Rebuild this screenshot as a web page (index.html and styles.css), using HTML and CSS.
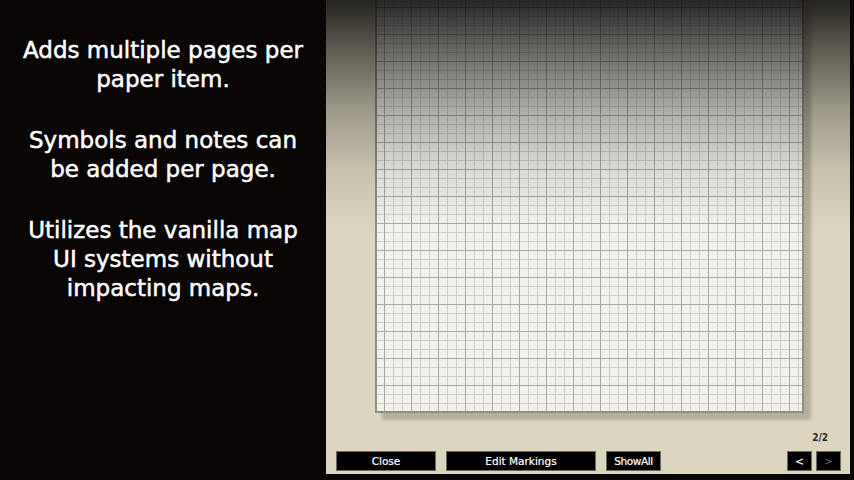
FILE: index.html
```html
<!DOCTYPE html>
<html lang="en">
<head>
    <meta charset="UTF-8">
    <meta name="viewport" content="width=device-width, initial-scale=1.0">
    <title>Paper Pages</title>
    <link rel="stylesheet" href="styles.css">
</head>
<body>
    <main class="stage">
        <section class="info">
            <p>Adds multiple pages per paper item.</p>
            <p>Symbols and notes can be added per page.</p>
            <p>Utilizes the vanilla map UI systems without impacting maps.</p>
        </section>
        <section class="viewer">
            <div class="sheet_area">
                <div class="sheet"></div>
            </div>
            <div class="pager">2/2</div>
            <div class="toolbar">
                <button class="btn btn_close">Close</button>
                <button class="btn btn_edit">Edit Markings</button>
                <button class="btn btn_show">ShowAll</button>
                <span class="spacer"></span>
                <button class="btn btn_nav">&lt;</button>
                <button class="btn btn_nav off">&gt;</button>
            </div>
        </section>
        <div class="edge"></div>
    </main>
</body>
</html>
```
FILE: styles.css
```css
* {
    box-sizing: border-box;
}
html, body {
    margin: 0;
    height: 100%;
    background: #0a0505;
}
.stage {
    display: flex;
    width: 854px;
    height: 480px;
    overflow: hidden;
}
.info {
    width: 326px;
    padding-top: 36px;
    color: #fff;
    text-align: center;
    font-family: "DejaVu Sans", sans-serif;
    font-size: 23px;
    line-height: 29px;
    -webkit-text-stroke: 0.5px #fff;
}
.info p {
    margin: 0 0 32px 0;
    padding: 0 14px;
}
.viewer {
    position: relative;
    width: 524px;
    height: 474px;
    background: #dcd6c0;
    display: flex;
    flex-direction: column;
}
.viewer::before {
    content: "";
    position: absolute;
    inset: 0;
    z-index: 2;
    pointer-events: none;
    background: linear-gradient(to bottom,
        rgba(12, 10, 10, 0.88) 0,
        rgba(12, 10, 10, 0.6) 50px,
        rgba(12, 10, 10, 0.3) 110px,
        rgba(12, 10, 10, 0.1) 170px,
        rgba(12, 10, 10, 0) 230px);
}
.edge {
    width: 4px;
    height: 480px;
    background: #0a0505;
}
.sheet_area {
    height: 420px;
    padding-left: 49px;
}
.sheet {
    width: 429px;
    height: 413px;
    border: 2px solid #8e8e8a;
    border-top: none;
    background-color: #f3f2ea;
    background-image:
        linear-gradient(to right, #a8a8a4 1px, transparent 1px),
        linear-gradient(to bottom, #a8a8a4 1px, transparent 1px),
        linear-gradient(to right, #d0d0ca 1px, transparent 1px),
        linear-gradient(to bottom, #d0d0ca 1px, transparent 1px);
    background-size: 27px 27px, 27px 27px, 9px 9px, 9px 9px;
    background-position: 7px 7px;
    box-shadow: 7px 7px 3px rgba(60, 55, 40, 0.25);
}
.pager {
    height: 31px;
    padding: 12px 22px 0 0;
    text-align: right;
    font-family: "DejaVu Sans Condensed", "DejaVu Sans", sans-serif;
    font-size: 10px;
    font-weight: bold;
    color: #2a2a28;
}
.toolbar {
    display: flex;
    gap: 10px;
    padding-left: 10px;
    padding-right: 9px;
}
.btn {
    height: 20px;
    padding: 0;
    background: #000;
    color: #fff;
    border: 1px solid #6a6a66;
    font-family: "DejaVu Sans", sans-serif;
    font-size: 10.5px;
    -webkit-text-stroke: 0.2px #fff;
}
.btn_close {
    width: 100px;
}
.btn_edit {
    width: 150px;
}
.btn_show {
    width: 55px;
    letter-spacing: -0.4px;
}
.spacer {
    flex: 1;
}
.btn_nav {
    width: 25px;
    margin-left: -6px;
}
.btn_nav.off {
    color: #6a6a66;
    -webkit-text-stroke: 0;
}
```
